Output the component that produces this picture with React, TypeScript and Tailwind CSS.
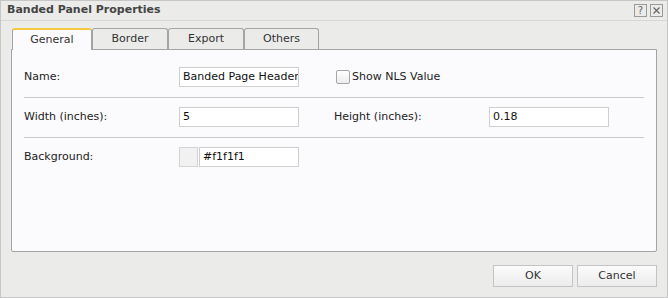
export default function App() {
  return (
    <div
      className="h-[298px] w-[668px] bg-white text-[11px] text-[#222]"
      style={{ fontFamily: '"DejaVu Sans", Verdana, sans-serif' }}
    >
      <div className="flex h-full w-full flex-col border border-[#c6c6c6] bg-[#ebece9]">
        {/* title bar */}
        <div className="flex h-[20px] items-center justify-between border-b border-[#d6d8d4] pl-[6px] pr-[4px]">
          <span className="text-[11px] font-bold text-[#444]">Banded Panel Properties</span>
          <div className="flex gap-[3px]">
            <span className="flex h-[13px] w-[13px] items-center justify-center border border-[#9a9a9a] text-[10px] leading-none text-[#666]">
              ?
            </span>
            <span className="flex h-[13px] w-[13px] items-center justify-center border border-[#9a9a9a] text-[#666]">
              <svg width="7" height="7" viewBox="0 0 7 7">
                <path d="M0.5 0.5L6.5 6.5M6.5 0.5L0.5 6.5" stroke="#666" strokeWidth="1.2" />
              </svg>
            </span>
          </div>
        </div>

        {/* body */}
        <div className="flex flex-1 flex-col px-[10px] pt-[7px]">
          {/* tabs */}
          <div className="flex h-[21px] pl-[1px]">
            <div className="relative z-10 flex h-[22px] w-[80px] items-center justify-center rounded-t-[3px] border border-b-0 border-t-2 border-[#a4a4a4] border-t-[#f5c842] bg-[#fbfafc] text-[#333]">
              General
            </div>
            {['Border', 'Export', 'Others'].map((t, i) => (
              <div
                key={t}
                className={`flex h-[21px] items-center justify-center rounded-t-[3px] border border-b-0 border-[#a4a4a4] bg-[#ebece9] text-[#333] ${
                  i === 2 ? 'w-[75px]' : 'w-[76px]'
                }`}
              >
                {t}
              </div>
            ))}
          </div>

          {/* panel */}
          <div className="flex h-[203px] flex-col rounded-b-[2px] border border-[#a4a4a4] bg-[#fbfafc] px-[12px] pt-[17px]">
            <div className="flex h-[20px] items-center">
              <span className="w-[155px]">Name:</span>
              <div className="flex h-[20px] w-[120px] items-center overflow-hidden whitespace-nowrap border border-[#cfcfcf] bg-white px-[3px] text-[#111]">
                Banded Page Header
              </div>
              <span className="ml-[37px] h-[14px] w-[14px] rounded-[2px] border border-[#a6a6a6] bg-gradient-to-b from-white to-[#ececec]" />
              <span className="ml-[2px]">Show NLS Value</span>
            </div>
            <div className="mt-[10px] mb-[9px] h-px w-[620px] bg-[#c9c9c9]" />

            <div className="flex h-[20px] items-center">
              <span className="w-[155px]">Width (inches):</span>
              <div className="flex h-[20px] w-[120px] items-center border border-[#cfcfcf] bg-white px-[3px] text-[#111]">
                5
              </div>
              <span className="ml-[35px] w-[155px]">Height (inches):</span>
              <div className="flex h-[20px] w-[120px] items-center border border-[#cfcfcf] bg-white px-[3px] text-[#111]">
                0.18
              </div>
            </div>
            <div className="mt-[10px] mb-[9px] h-px w-[620px] bg-[#c9c9c9]" />

            <div className="flex h-[20px] items-center">
              <span className="w-[155px]">Background:</span>
              <span className="h-[20px] w-[19px] border border-[#d4d4d4] bg-[#f1f1f1]" />
              <div className="ml-[1px] flex h-[20px] w-[100px] items-center border border-[#cfcfcf] bg-white px-[3px] text-[#111]">
                #f1f1f1
              </div>
            </div>
          </div>

          {/* buttons */}
          <div className="mt-[13px] flex justify-end gap-[4px]">
            <button className="h-[22px] w-[80px] border border-[#c4c4c4] bg-gradient-to-b from-[#fbfbfb] to-[#ececec] text-[#333]">
              OK
            </button>
            <button className="h-[22px] w-[80px] border border-[#c4c4c4] bg-gradient-to-b from-[#fbfbfb] to-[#ececec] text-[#333]">
              Cancel
            </button>
          </div>
        </div>
      </div>
    </div>
  )
}
